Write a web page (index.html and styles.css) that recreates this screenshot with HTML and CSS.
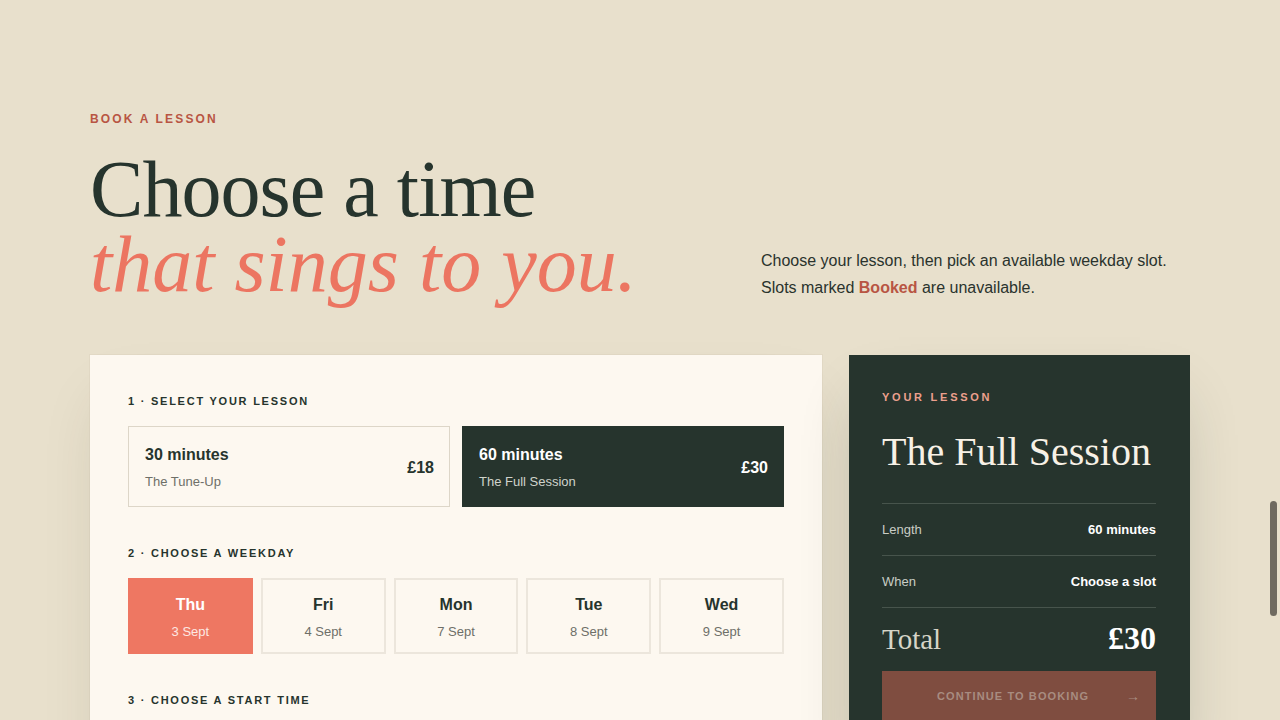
FILE: index.html
```html
<!DOCTYPE html>
<html lang="en">
<head>
<meta charset="utf-8">
<title>Book a lesson</title>
<link rel="stylesheet" href="styles.css">
</head>
<body>
<main class="page">
  <header class="hero">
    <div class="hero-left">
      <p class="eyebrow">Book a lesson</p>
      <h1 class="headline">Choose a time<br><em>that sings to you.</em></h1>
    </div>
    <p class="intro">Choose your lesson, then pick an available weekday slot.<br>Slots marked <strong>Booked</strong> are unavailable.</p>
  </header>

  <div class="layout">
    <section class="booking">
      <div class="step">
        <h2 class="step-label">1 · Select your lesson</h2>
        <div class="lessons">
          <button class="lesson">
            <span class="lesson-text">
              <span class="lesson-len">30 minutes</span>
              <span class="lesson-name">The Tune-Up</span>
            </span>
            <span class="lesson-price">£18</span>
          </button>
          <button class="lesson is-selected">
            <span class="lesson-text">
              <span class="lesson-len">60 minutes</span>
              <span class="lesson-name">The Full Session</span>
            </span>
            <span class="lesson-price">£30</span>
          </button>
        </div>
      </div>

      <div class="step">
        <h2 class="step-label">2 · Choose a weekday</h2>
        <div class="days">
          <button class="day is-selected"><span class="day-name">Thu</span><span class="day-date">3 Sept</span></button>
          <button class="day"><span class="day-name">Fri</span><span class="day-date">4 Sept</span></button>
          <button class="day"><span class="day-name">Mon</span><span class="day-date">7 Sept</span></button>
          <button class="day"><span class="day-name">Tue</span><span class="day-date">8 Sept</span></button>
          <button class="day"><span class="day-name">Wed</span><span class="day-date">9 Sept</span></button>
        </div>
      </div>

      <div class="step">
        <h2 class="step-label">3 · Choose a start time</h2>
        <div class="slots">
          <button class="slot">09:00</button>
          <button class="slot is-booked">10:00 · Booked</button>
          <button class="slot">11:00</button>
          <button class="slot">14:00</button>
          <button class="slot is-booked">15:00 · Booked</button>
          <button class="slot">16:00</button>
        </div>
      </div>
    </section>

    <aside class="summary">
      <p class="summary-eyebrow">Your lesson</p>
      <h2 class="summary-title">The Full Session</h2>
      <div class="summary-row"><span class="row-key">Length</span><span class="row-val">60 minutes</span></div>
      <div class="summary-row"><span class="row-key">When</span><span class="row-val">Choose a slot</span></div>
      <div class="summary-total"><span class="total-key">Total</span><span class="total-val">£30</span></div>
      <button class="cta" disabled><span class="cta-text">Continue to booking</span><span class="cta-arrow">→</span></button>
    </aside>
  </div>
</main>
<div class="scroll-thumb"></div>
</body>
</html>
```

FILE: styles.css
```css
* { box-sizing: border-box; }

html, body {
  margin: 0;
  padding: 0;
  height: 720px;
  overflow: hidden;
}

body {
  background: #e8e0cc;
  color: #26342d;
  font-family: "Liberation Sans", Arial, sans-serif;
}

button {
  font: inherit;
  color: inherit;
  cursor: pointer;
  text-align: left;
}

.page {
  max-width: 1100px;
  margin: 0 auto;
  padding-top: 111px;
}

.hero {
  display: grid;
  grid-template-columns: 1fr 429px;
  align-items: end;
}

.eyebrow {
  margin: 0 0 25px;
  font-size: 12px;
  line-height: 16px;
  font-weight: 700;
  letter-spacing: 0.18em;
  text-transform: uppercase;
  color: #b85543;
}

.headline {
  margin: 0;
  font-family: "Liberation Serif", "Times New Roman", serif;
  font-weight: 400;
  font-size: 80px;
  line-height: 75px;
  letter-spacing: -0.012em;
  color: #26342d;
}

.headline em {
  font-style: italic;
  color: #ec7561;
  letter-spacing: 0;
}

.intro {
  margin: 0 0 1px;
  font-size: 16px;
  line-height: 27px;
  color: #2a332d;
}

.intro strong {
  color: #b85543;
}

.layout {
  display: grid;
  grid-template-columns: 1fr 341px;
  gap: 27px;
  margin-top: 53px;
  align-items: start;
}

.booking {
  background: #fdf8f0;
  padding: 39px 38px 40px;
  box-shadow: 0 0 0 1px rgba(120, 100, 70, 0.05), 0 30px 60px -20px rgba(60, 50, 30, 0.18);
  display: flex;
  flex-direction: column;
  gap: 39px;
}

.step-label {
  margin: 0 0 18px;
  font-size: 11px;
  line-height: 14px;
  font-weight: 700;
  letter-spacing: 0.16em;
  text-transform: uppercase;
  color: #26342d;
}

.lessons {
  display: grid;
  grid-template-columns: 1fr 1fr;
  gap: 12px;
}

.lesson {
  display: flex;
  align-items: center;
  justify-content: space-between;
  padding: 18px 15px 16px 16px;
  background: transparent;
  border: 1px solid #ddd6c8;
  border-radius: 0;
  color: #26342d;
}

.lesson-text {
  display: flex;
  flex-direction: column;
  gap: 9px;
}

.lesson-len {
  font-size: 16px;
  line-height: 20px;
  font-weight: 700;
}

.lesson-name {
  font-size: 13px;
  line-height: 16px;
  color: #6e6f68;
}

.lesson-price {
  font-size: 16px;
  font-weight: 700;
}

.lesson.is-selected {
  background: #26342d;
  border-color: #26342d;
  color: #ffffff;
}

.lesson.is-selected .lesson-name {
  color: #cfd3cb;
}

.days {
  display: grid;
  grid-template-columns: repeat(5, 1fr);
  gap: 8px;
}

.day {
  display: flex;
  flex-direction: column;
  align-items: center;
  gap: 9px;
  padding: 15px 0 12px;
  background: transparent;
  border: 2px solid #ece6dc;
  border-radius: 0;
  color: #26342d;
}

.day-name {
  font-size: 16px;
  line-height: 20px;
  font-weight: 700;
}

.day-date {
  font-size: 13px;
  line-height: 16px;
  color: #6e6f68;
}

.day.is-selected {
  background: #ee7762;
  border-color: #ee7762;
  color: #ffffff;
}

.day.is-selected .day-date {
  color: #fde8e2;
}

.slots {
  display: grid;
  grid-template-columns: repeat(3, 1fr);
  gap: 8px;
}

.slot {
  padding: 14px;
  border: 2px solid #ece5da;
  background: transparent;
  font-size: 14px;
  font-weight: 700;
  text-align: center;
}

.slot.is-booked {
  color: #b85543;
  text-decoration: line-through;
}

.summary {
  background: #26342d;
  color: #ffffff;
  padding: 35px 34px 40px 33px;
  box-shadow: 0 30px 60px -20px rgba(38, 52, 45, 0.3);
}

.summary-eyebrow {
  margin: 0 0 25px;
  font-size: 11px;
  line-height: 14px;
  font-weight: 700;
  letter-spacing: 0.25em;
  text-transform: uppercase;
  color: #eca08e;
}

.summary-title {
  margin: 0 0 28px;
  font-family: "Liberation Serif", "Times New Roman", serif;
  font-weight: 400;
  font-size: 40px;
  line-height: 46px;
  color: #f7f1e6;
}

.summary-row {
  display: flex;
  justify-content: space-between;
  align-items: center;
  height: 52px;
  border-top: 1px solid #47544c;
  font-size: 13px;
}

.row-key {
  color: #c9cdc5;
}

.row-val {
  font-weight: 700;
  color: #ffffff;
}

.summary-total {
  display: flex;
  justify-content: space-between;
  align-items: baseline;
  border-top: 1px solid #47544c;
  padding-top: 15px;
  height: 64px;
}

.total-key {
  font-family: "Liberation Serif", "Times New Roman", serif;
  font-size: 29px;
  line-height: 30px;
  color: #d6d5c8;
}

.total-val {
  font-family: "Liberation Serif", "Times New Roman", serif;
  font-size: 32px;
  line-height: 30px;
  font-weight: 700;
  color: #ffffff;
}

.cta {
  display: flex;
  align-items: center;
  justify-content: space-between;
  width: 100%;
  height: 50px;
  padding: 0 16px 0 55px;
  background: #7f4d40;
  border: none;
  border-radius: 0;
  color: #a88c80;
  cursor: not-allowed;
}

.cta-text {
  font-size: 11px;
  font-weight: 700;
  letter-spacing: 0.1em;
  text-transform: uppercase;
}

.cta-arrow {
  font-size: 14px;
}

.scroll-thumb {
  position: fixed;
  top: 501px;
  right: 3px;
  width: 7px;
  height: 115px;
  border-radius: 4px;
  background: #6f6a60;
}
```
